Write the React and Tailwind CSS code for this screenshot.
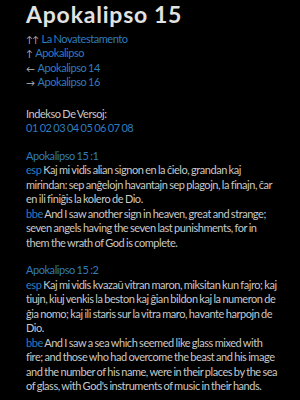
const verses = [
  {
    ref: 'Apokalipso 15 :1',
    esp: 'Kaj mi vidis alian signon en la ĉielo, grandan kaj mirindan: sep anĝelojn havantajn sep plagojn, la finajn, ĉar en ili finiĝis la kolero de Dio.',
    bbe: 'And I saw another sign in heaven, great and strange; seven angels having the seven last punishments, for in them the wrath of God is complete.',
  },
  {
    ref: 'Apokalipso 15 :2',
    esp: 'Kaj mi vidis kvazaŭ vitran maron, miksitan kun fajro; kaj tiujn, kiuj venkis la beston kaj ĝian bildon kaj la numeron de ĝia nomo; kaj ili staris sur la vitra maro, havante harpojn de Dio.',
    bbe: "And I saw a sea which seemed like glass mixed with fire; and those who had overcome the beast and his image and the number of his name, were in their places by the sea of glass, with God's instruments of music in their hands.",
  },
];

const nav = [
  ['↑↑', 'La Novatestamento'],
  ['↑', 'Apokalipso'],
  ['←', 'Apokalipso 14'],
  ['→', 'Apokalipso 16'],
];

export default function App() {
  return (
    <div
      className="min-h-[400px] w-[300px] bg-black pl-[26px] pr-[20px] text-[11px] leading-[14.5px] tracking-[-0.45px] [word-spacing:-0.6px] text-[#c8c8c8]"
      style={{ fontFamily: 'Lato, "Liberation Sans", sans-serif' }}
    >
      <h1 className="pt-[1px] text-[23px] font-bold leading-[26px] tracking-[0.8px] text-[#e2e2e2]">Apokalipso 15</h1>

      {/* navigado */}
      <div className="mt-[5px]">
        {nav.map(([arrow, label]) => (
          <p key={label} className="h-[14.4px]">
            <span className="mr-[3px] text-[9px] leading-none text-[#bbb]">{arrow}</span>
            <a className="text-[#2f7cbf]">{label}</a>
          </p>
        ))}
      </div>

      {/* indekso */}
      <div className="mt-[17px]">
        <p>Indekso De Versoj:</p>
        <p className="text-[#2f7cbf]">01 02 03 04 05 06 07 08</p>
      </div>

      {verses.map((v) => (
        <div key={v.ref} className="mt-[13px]">
          <p className="text-[#2f7cbf]">{v.ref}</p>
          <p>
            <span className="text-[#2f7cbf]">esp</span> {v.esp}
          </p>
          <p>
            <span className="text-[#2f7cbf]">bbe</span> {v.bbe}
          </p>
        </div>
      ))}
    </div>
  );
}
